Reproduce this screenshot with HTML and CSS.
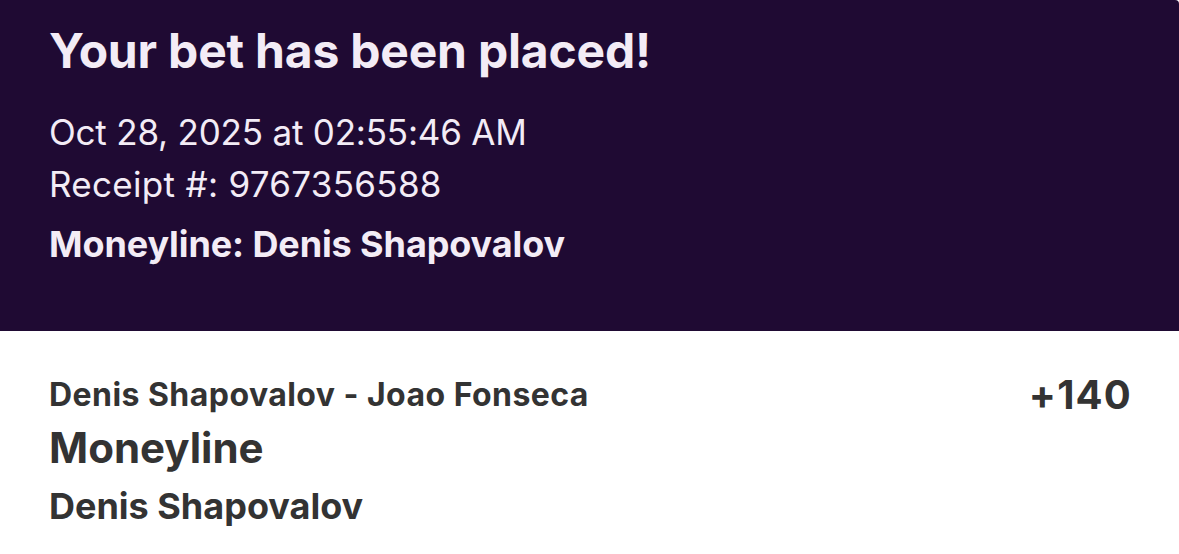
FILE: index.html
```html
<!DOCTYPE html>
<html>
<head>
<meta charset="utf-8">
<link rel="stylesheet" href="styles.css">
</head>
<body>
<div class="receipt">
  <header class="hero">
    <h1 class="title">Your bet has been placed!</h1>
    <div class="meta">
      <div class="meta-line">Oct 28, 2025 at 02:55:46 AM</div>
      <div class="meta-line meta-receipt">Receipt #: 9767356588</div>
    </div>
    <div class="summary">Moneyline: Denis Shapovalov</div>
  </header>
  <section class="leg">
    <div class="leg-info">
      <div class="event">Denis Shapovalov - Joao Fonseca</div>
      <div class="market">Moneyline</div>
      <div class="selection">Denis Shapovalov</div>
    </div>
    <div class="odds">+140</div>
  </section>
</div>
</body>
</html>
```
FILE: styles.css
```css
* { box-sizing: border-box; margin: 0; padding: 0; }
html, body { width: 1179px; height: 554px; overflow: hidden; background: #ffffff; }
body { font-family: Inter, "Noto Sans", sans-serif; }
.receipt { display: flex; flex-direction: column; }
.hero {
  background: #1f0a33;
  color: #f3ecf6;
  height: 331px;
  padding: 22px 49px 0 49px;
  border-top-right-radius: 4px;
  display: flex;
  flex-direction: column;
}
.title { font-size: 48px; font-weight: 700; line-height: 58px; letter-spacing: -0.2px; }
.meta { margin-top: 26px; display: flex; flex-direction: column; }
.meta-line { font-size: 35px; font-weight: 400; line-height: 52px; letter-spacing: -0.2px; }
.meta-receipt { letter-spacing: 0.3px; }
.summary { margin-top: 12px; font-size: 36px; font-weight: 700; line-height: 44px; letter-spacing: -0.1px; }
.leg {
  display: flex;
  justify-content: space-between;
  align-items: flex-start;
  padding: 44px 47px 0 49px;
  color: #333333;
}
.leg-info { display: flex; flex-direction: column; }
.event { font-size: 32px; font-weight: 700; line-height: 40px; letter-spacing: 0.45px; }
.market { margin-top: 8px; font-size: 42px; font-weight: 700; line-height: 50px; }
.selection { margin-top: 11px; font-size: 36px; font-weight: 700; line-height: 44px; }
.odds { font-size: 40px; font-weight: 700; line-height: 48px; letter-spacing: 1.2px; margin-top: -4px; }
```
